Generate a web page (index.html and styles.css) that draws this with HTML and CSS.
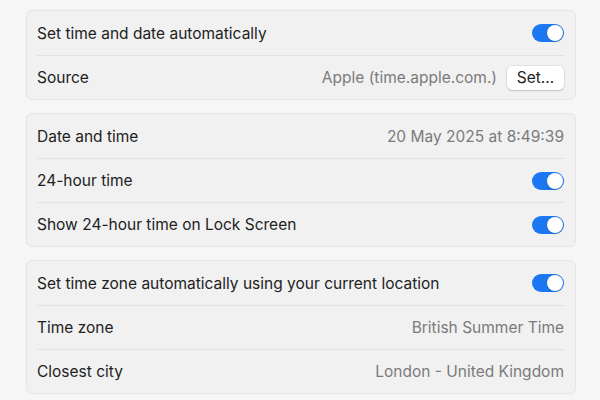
FILE: index.html
```html
<!DOCTYPE html>
<html>
<head>
<meta charset="utf-8">
<link rel="stylesheet" href="styles.css">
</head>
<body>
<div class="page">
  <div class="card">
    <div class="row"><span class="label">Set time and date automatically</span><span class="toggle"><span class="knob"></span></span></div>
    <div class="row"><span class="label">Source</span><span class="right"><span class="value">Apple (time.apple.com.)</span><span class="btn">Set…</span></span></div>
  </div>
  <div class="card">
    <div class="row"><span class="label">Date and time</span><span class="value">20 May 2025 at 8:49:39</span></div>
    <div class="row"><span class="label">24-hour time</span><span class="toggle"><span class="knob"></span></span></div>
    <div class="row"><span class="label">Show 24-hour time on Lock Screen</span><span class="toggle"><span class="knob"></span></span></div>
  </div>
  <div class="card">
    <div class="row"><span class="label">Set time zone automatically using your current location</span><span class="toggle"><span class="knob"></span></span></div>
    <div class="row"><span class="label">Time zone</span><span class="value">British Summer Time</span></div>
    <div class="row"><span class="label">Closest city</span><span class="value">London - United Kingdom</span></div>
  </div>
</div>
</body>
</html>
```
FILE: styles.css
```css
html, body {
  margin: 0;
  padding: 0;
  background: #f6f6f6;
  width: 600px;
  height: 400px;
  overflow: hidden;
}
.page {
  display: flex;
  flex-direction: column;
  gap: 13px;
  padding: 10px 24px 0 26px;
  font-family: Inter, "Noto Sans", sans-serif;
  font-size: 15.5px;
  color: #222;
}
.card {
  background: #f1f1f1;
  border: 1px solid #e5e5e5;
  border-radius: 6px;
  padding: 0 11px 0 10px;
}
.row {
  height: 43px;
  display: flex;
  align-items: center;
  justify-content: space-between;
  border-top: 1px solid #e2e2e2;
}
.row:first-child {
  border-top: none;
  height: 44px;
}
.label {
  color: #222;
}
.value {
  color: #7b7b7b;
}
.right {
  display: flex;
  align-items: center;
  gap: 10px;
}
.btn {
  background: #fff;
  border-radius: 5px;
  box-shadow: 0 0 0 0.5px rgba(0,0,0,0.12), 0 1px 1.5px rgba(0,0,0,0.15);
  height: 24px;
  width: 57px;
  display: flex;
  align-items: center;
  justify-content: center;
  color: #222;
  font-size: 15.5px;
}
.toggle {
  width: 32px;
  height: 18px;
  border-radius: 9px;
  background: #1b78f2;
  display: flex;
  align-items: center;
  justify-content: flex-end;
  padding: 0 1px;
  box-sizing: border-box;
}
.knob {
  width: 16px;
  height: 16px;
  border-radius: 50%;
  background: #fff;
  box-shadow: 0 0.5px 1.5px rgba(0,0,0,0.3);
}
```
